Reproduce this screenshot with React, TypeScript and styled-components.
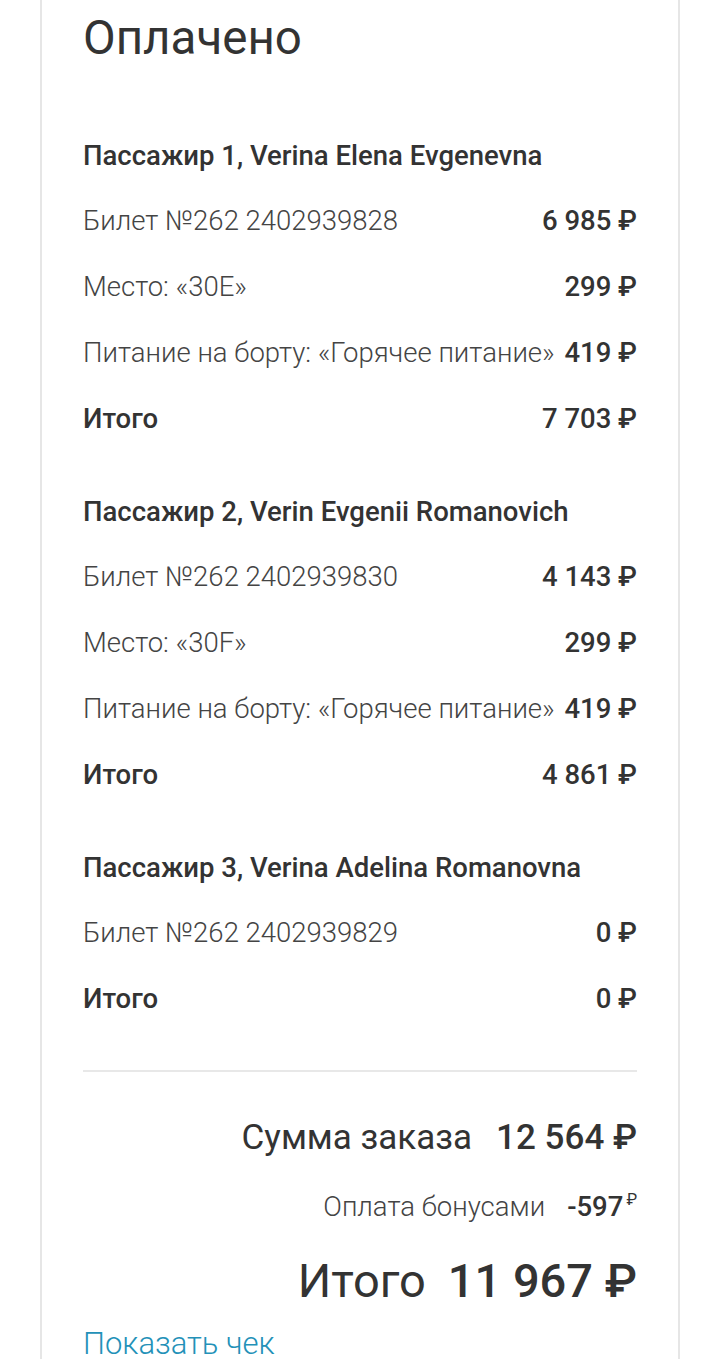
import React from "react";
import styled, { createGlobalStyle } from "styled-components";

const Global = createGlobalStyle`
  html, body { margin: 0; padding: 0; background: #fff; }
  body { font-family: Roboto, "Noto Sans", sans-serif; color: #333; }
`;

const Card = styled.div`
  margin-left: 40px;
  width: 640px;
  min-height: 1359px;
  box-sizing: border-box;
  border-left: 2px solid #e6e6e6;
  border-right: 2px solid #e6e6e6;
  padding: 10px 41px 0 41px;
`;

const Title = styled.h1`
  margin: 0;
  font-size: 47.5px;
  line-height: 56px;
  font-weight: 400;
  color: #333;
`;

const Section = styled.section<{ $first?: boolean }>`
  margin-top: ${(p) => (p.$first ? "57px" : "28px")};
`;

const PassengerHead = styled.div`
  height: 64px;
  display: flex;
  align-items: center;
  font-size: 27.5px;
  font-weight: 500;
  color: #333;
`;

const Row = styled.div`
  height: 66px;
  display: flex;
  align-items: center;
  justify-content: space-between;
  font-size: 27.5px;
`;

const Label = styled.span<{ $bold?: boolean }>`
  font-weight: ${(p) => (p.$bold ? 500 : 300)};
  color: ${(p) => (p.$bold ? "#333" : "#444")};
  white-space: nowrap;
`;

const Value = styled.span`
  font-weight: 500;
  color: #333;
  white-space: nowrap;
`;

const Divider = styled.hr`
  margin: 39px 0 0 0;
  border: none;
  border-top: 2px solid #e8e8e8;
`;

const Totals = styled.div`
  display: flex;
  flex-direction: column;
  align-items: flex-end;
  margin-top: 46px;
`;

const SumLine = styled.div`
  display: flex;
  align-items: baseline;
  gap: 24px;
  font-size: 35px;
  line-height: 40px;
`;

const BonusLine = styled.div`
  display: flex;
  align-items: baseline;
  gap: 22px;
  margin-top: 27px;
  font-size: 27.5px;
  line-height: 30px;
`;

const Sup = styled.sup`
  font-size: 16px;
  font-weight: 400;
  margin-left: 3px;
  vertical-align: 11px;
`;

const GrandLine = styled.div`
  display: flex;
  align-items: baseline;
  gap: 22px;
  margin-top: 31px;
  font-size: 47px;
  line-height: 56px;
`;

const Regular = styled.span`
  font-weight: 400;
  color: #333;
`;

const Light = styled.span`
  font-weight: 300;
  color: #444;
`;

const Link = styled.a`
  display: block;
  margin-top: 16px;
  font-size: 31px;
  line-height: 38px;
  font-weight: 300;
  color: #2391b8;
  text-decoration: none;
`;

type Item = { label: string; value: string; bold?: boolean };
type Passenger = { name: string; items: Item[] };

const passengers: Passenger[] = [
  {
    name: "Пассажир 1, Verina Elena Evgenevna",
    items: [
      { label: "Билет №262 2402939828", value: "6 985 ₽" },
      { label: "Место: «30E»", value: "299 ₽" },
      { label: "Питание на борту: «Горячее питание»", value: "419 ₽" },
      { label: "Итого", value: "7 703 ₽", bold: true },
    ],
  },
  {
    name: "Пассажир 2, Verin Evgenii Romanovich",
    items: [
      { label: "Билет №262 2402939830", value: "4 143 ₽" },
      { label: "Место: «30F»", value: "299 ₽" },
      { label: "Питание на борту: «Горячее питание»", value: "419 ₽" },
      { label: "Итого", value: "4 861 ₽", bold: true },
    ],
  },
  {
    name: "Пассажир 3, Verina Adelina Romanovna",
    items: [
      { label: "Билет №262 2402939829", value: "0 ₽" },
      { label: "Итого", value: "0 ₽", bold: true },
    ],
  },
];

export default function App() {
  return (
    <>
      <Global />
      <Card>
        <Title>Оплачено</Title>
        {passengers.map((p, i) => (
          <Section key={p.name} $first={i === 0}>
            <PassengerHead>{p.name}</PassengerHead>
            {p.items.map((it) => (
              <Row key={it.label}>
                <Label $bold={it.bold}>{it.label}</Label>
                <Value>{it.value}</Value>
              </Row>
            ))}
          </Section>
        ))}
        <Divider />
        <Totals>
          <SumLine>
            <Regular>Сумма заказа</Regular>
            <Value>12 564 ₽</Value>
          </SumLine>
          <BonusLine>
            <Light>Оплата бонусами</Light>
            <Value>
              -597<Sup>₽</Sup>
            </Value>
          </BonusLine>
          <GrandLine>
            <Regular>Итого</Regular>
            <Value>11 967 ₽</Value>
          </GrandLine>
        </Totals>
        <Link href="#">Показать чек</Link>
      </Card>
    </>
  );
}
